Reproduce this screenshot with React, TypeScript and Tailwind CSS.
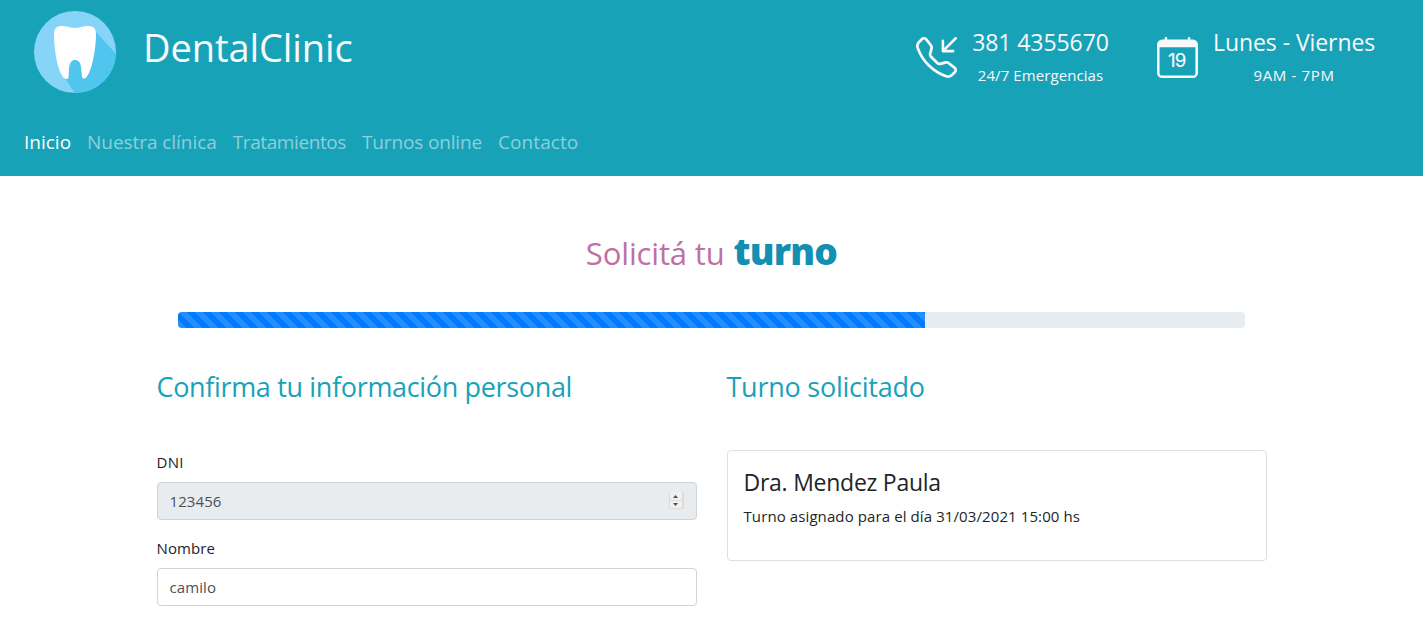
import { BsTelephoneInbound } from "react-icons/bs";

const navItems = [
  { label: "Inicio", cls: "text-white tracking-[0px]" },
  { label: "Nuestra clínica", cls: "text-white/50 tracking-[-0.06px]" },
  { label: "Tratamientos", cls: "text-white/50 tracking-[-0.4px]" },
  { label: "Turnos online", cls: "text-white/50 tracking-[-0.15px]" },
  { label: "Contacto", cls: "text-white/50 tracking-[0.08px]" },
];

function ToothLogo() {
  return (
    <svg className="h-[82px] w-[82px] shrink-0" viewBox="0 0 82 82">
      <defs>
        <clipPath id="disc"><circle cx="41" cy="41" r="41" /></clipPath>
      </defs>
      <circle cx="41" cy="41" r="41" fill="#86d4f8" />
      <path clipPath="url(#disc)" d="M61 20L84 45V84H42L31 67L40 45Z" fill="#50c5ee" />
      <path
        d="M28 15C33 15 37 17 41 17C45 17 49 15 54 15C60 15 62.500 18 62 25C61.500 41 57.500 62 51.500 67C50 68.200 48.300 67.500 48 65.500C47.600 62 47.500 60 47 56C46.500 51 44 49 41 49C38 49 35.500 51 35 56C34.700 60 35 62 34.500 66C34 68.500 32 68.500 30 67C24 61 20.500 42 20 25C19.500 18 22 15 28 15Z"
        fill="#fff"
      />
    </svg>
  );
}

function CalendarIcon() {
  return (
    <svg className="h-[41px] w-[41px] shrink-0" viewBox="0 0 16 16" fill="#f8f9fa">
      <path
        fillRule="evenodd"
        d="M1 4v10a1 1 0 0 0 1 1h12a1 1 0 0 0 1-1V4H1zm1-3a2 2 0 0 0-2 2v11a2 2 0 0 0 2 2h12a2 2 0 0 0 2-2V3a2 2 0 0 0-2-2H2z"
      />
      <path d="M3.500 0a.5.5 0 0 1 .5.5V1a.5.5 0 0 1-1 0V.5a.5.5 0 0 1 .5-.5zm9 0a.5.5 0 0 1 .5.5V1a.5.5 0 0 1-1 0V.5a.5.5 0 0 1 .5-.5z" />
      <text x="7.700" y="11.700" textAnchor="middle" fontSize="7.300" letterSpacing="-0.300" stroke="#f8f9fa" strokeWidth="0.060" fontFamily="Inter, Liberation Sans, sans-serif">19</text>
    </svg>
  );
}

export default function App() {
  return (
    <div className="h-[626px] overflow-hidden bg-white font-['Open_Sans','Noto_Sans',sans-serif] text-[15px] leading-6 text-[#212529]">
      <header className="flex h-[176px] flex-col bg-[#18a2b8] text-[#f8f9fa]">
        <div className="flex h-[118px] items-start pr-12 pl-[34px] pt-[11px]">
          <ToothLogo />
          <h1 className="ml-[27px] mt-[12px] text-[38px] leading-[48px] whitespace-nowrap"><span className="tracking-[-0.08px]">DentalClinic</span></h1>
          <div className="ml-auto flex pt-[14px]">
            <BsTelephoneInbound className="mt-[12px] h-[41px] w-[41px] shrink-0" />
            <div className="ml-[15px] w-[137px] text-center whitespace-nowrap">
              <p className="mt-px text-[23px] leading-[32px] tracking-[-0.07px]">381 4355670</p>
              <p className="mt-[5px] tracking-[0.08px]">24/7 Emergencias</p>
            </div>
            <div className="ml-12 flex">
              <div className="mt-[12px]"><CalendarIcon /></div>
              <div className="ml-[15px] w-[162px] text-center whitespace-nowrap">
                <p className="mt-px text-[23px] leading-[32px] tracking-[-0.07px]">Lunes - Viernes</p>
                <p className="mt-[5px] tracking-[0.65px]">9AM - 7PM</p>
              </div>
            </div>
          </div>
        </div>
        <nav className="flex gap-4 pl-6 pt-[9px] text-[19px] leading-[30px] whitespace-nowrap">
          {navItems.map((item) => (
            <a key={item.label} className={item.cls}>{item.label}</a>
          ))}
        </nav>
      </header>

      <main className="mx-auto w-[1110px]">
        <h2 className="flex h-[136px] items-baseline justify-center pt-[47px] leading-[56px] whitespace-nowrap">
          <span className="text-[31px] tracking-[-0.15px] text-[#bd71a5]">Solicitá tu</span>
          <span className="ml-[9px] text-[37px] font-extrabold tracking-[-0.8px] text-[#138fb2]">turno</span>
        </h2>
        <div className="mx-auto flex h-4 w-[1067px] overflow-hidden rounded bg-[#e9ecef]">
          <div className="w-[747px] bg-[#007bff] bg-[linear-gradient(45deg,rgba(255,255,255,.15)_25%,transparent_25%,transparent_50%,rgba(255,255,255,.15)_50%,rgba(255,255,255,.15)_75%,transparent_75%,transparent)] bg-[length:16px_16px]" />
        </div>
        <div className="grid grid-cols-2 gap-[30px] pt-[42px]">
          <section>
            <h3 className="h-[80px] text-[27px] leading-[34px] whitespace-nowrap text-[#18a2b8]"><span className="tracking-[-0.34px]">Confirma tu información personal</span></h3>
            <label className="mb-2 block"><span className="tracking-[0.3px]">DNI</span></label>
            <div className="flex h-[38px] items-center justify-between rounded border border-[#ced4da] bg-[#e9ecef] px-3 text-[#495057]">
              <span className="tracking-[0.08px]">123456</span>
              <svg className="mb-px h-[17px] w-[15px]" viewBox="0 0 15 17">
                <rect width="15" height="17" fill="#dcdcdc" />
                <rect x="1" y="0" width="12" height="8" fill="#f0f0f0" />
                <rect x="1" y="9" width="12" height="7" fill="#f0f0f0" />
                <path d="M4 6L6.500 3L9 6ZM4 11H9L6.500 14Z" fill="#505050" />
              </svg>
            </div>
            <label className="mt-4 mb-2 block"><span className="tracking-[0.1px]">Nombre</span></label>
            <div className="flex h-[38px] items-center rounded border border-[#ced4da] px-3 text-[#495057]">
              <span className="tracking-[0.08px]">camilo</span>
            </div>
          </section>
          <section>
            <h3 className="h-[80px] text-[27px] leading-[34px] whitespace-nowrap text-[#18a2b8]"><span className="tracking-[-0.25px]">Turno solicitado</span></h3>
            <div className="h-[111px] rounded border border-[#dfdfdf] px-4 pt-[17px]">
              <h4 className="text-[23px] leading-[29px]"><span className="tracking-[-0.25px]">Dra. Mendez Paula</span></h4>
              <p className="mt-[7px]"><span className="tracking-[0.1px]">Turno asignado para el día 31/03/2021 15:00 hs</span></p>
            </div>
          </section>
        </div>
      </main>
    </div>
  );
}
